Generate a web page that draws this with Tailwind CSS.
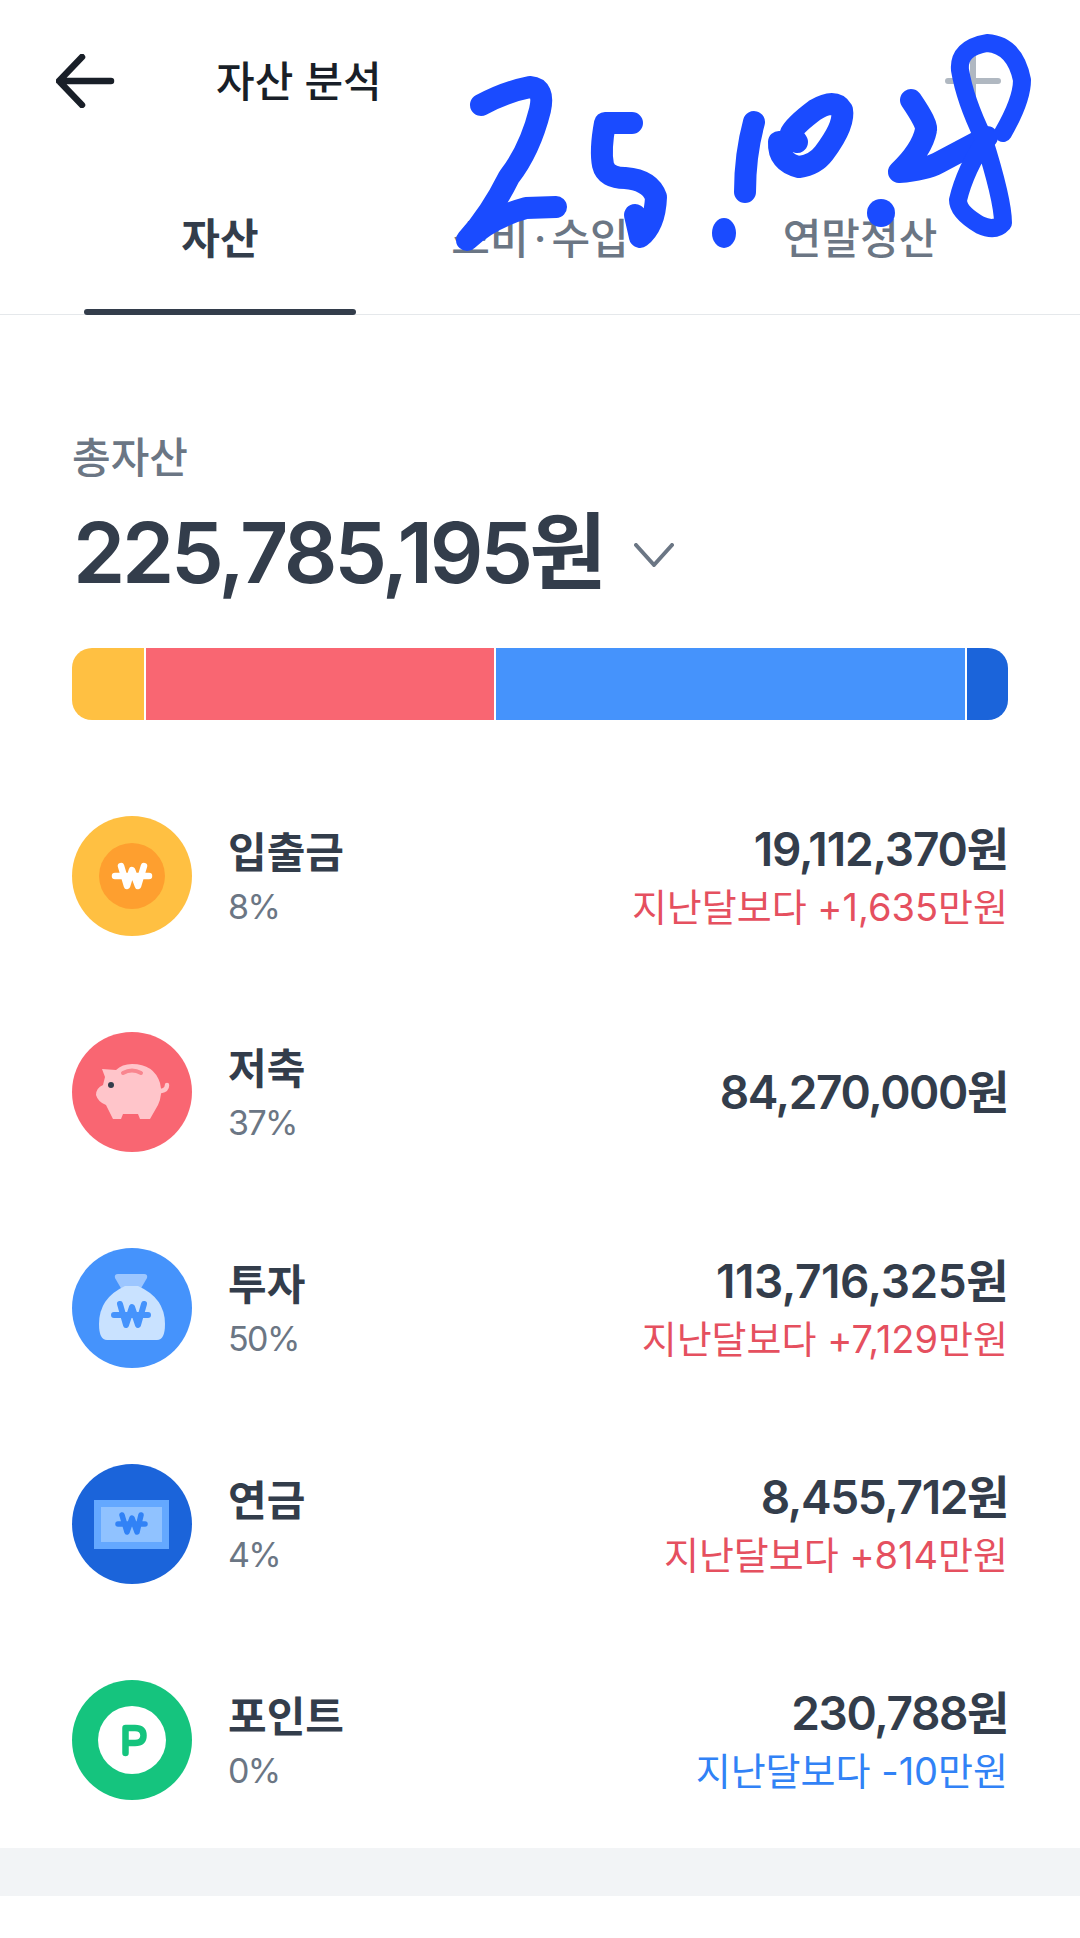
<!DOCTYPE html>
<html lang="ko">
<head>
<meta charset="utf-8">
<title>자산 분석</title>
<script src="https://cdn.jsdelivr.net/npm/@tailwindcss/browser@4"></script>
</head>
<body class="bg-white">
<div class="relative w-[1080px] h-[1938px] overflow-hidden bg-white font-['Inter','Noto_Sans_CJK_KR',sans-serif] text-[#333d4b]">

  <!-- header -->
  <header class="h-[162px] flex items-center pl-[56px] pr-[79px]">
    <svg width="60" height="54" viewBox="0 0 60 54" fill="none" stroke="#191f28" stroke-width="6.5" stroke-linecap="round" stroke-linejoin="round"><path d="M26 3 L3 27 L26 51 M3 27 H55"/></svg>
    <h1 class="ml-[100px] mt-[2px] text-[42px] font-medium text-[#191f28] leading-none">자산 분석</h1>
    <svg class="ml-auto" width="56" height="56" viewBox="0 0 56 56" fill="none" stroke="#b0b8c1" stroke-width="6" stroke-linecap="round"><path d="M3 28 H53 M28 3 V53"/></svg>
  </header>

  <!-- tabs -->
  <nav class="h-[153px] border-b border-[#e5e8eb] px-[60px] flex">
    <div class="flex-1 px-6 relative flex items-center justify-center text-[42px] font-bold text-[#333d4b]">자산<span class="absolute left-6 right-6 bottom-[-1px] h-[6px] rounded-full bg-[#333d4b]"></span></div>
    <div class="flex-1 px-6 flex items-center justify-center text-[42px] font-medium text-[#6b7684]">소비<span class="mx-[5px]">·</span>수입</div>
    <div class="flex-1 px-6 flex items-center justify-center text-[42px] font-medium text-[#6b7684]">연말정산</div>
  </nav>

  <main class="px-[72px]">
    <p class="mt-[118px] text-[42px] leading-[50px] font-medium text-[#6b7684]">총자산</p>
    <div class="mt-[28px] flex items-center h-[84px]">
      <span class="text-[84px] leading-none font-semibold tracking-[-0.04em] ml-[1px]">225,785,195원</span>
      <svg class="ml-[30px] mt-[4px]" width="40" height="24" viewBox="0 0 40 24" fill="none" stroke="#6b7684" stroke-width="4" stroke-linecap="round" stroke-linejoin="round"><path d="M2 2 L20 22 L38 2"/></svg>
    </div>

    <div class="mt-[53px] flex gap-[2px] h-[72px] rounded-[20px] overflow-hidden">
      <div class="w-[72px] bg-[#ffc042]"></div>
      <div class="w-[348px] bg-[#f96672]"></div>
      <div class="w-[469px] bg-[#4593fc]"></div>
      <div class="flex-1 bg-[#1b64da]"></div>
    </div>

    <ul class="mt-[96px] flex flex-col gap-[96px]">
      <li class="flex items-center h-[120px]">
        <div class="w-[120px] h-[120px] rounded-full bg-[#ffc042] flex items-center justify-center shrink-0">
          <svg width="66" height="66" viewBox="0 0 66 66"><circle cx="33" cy="33" r="33" fill="#fe9f2f"/><path d="M16 33 H50 M22 23 L28 43 L33 27 L39 43 L45 23" fill="none" stroke="#fff" stroke-width="6.5" stroke-linecap="round" stroke-linejoin="round"/></svg>
        </div>
        <div class="ml-[36px] mt-[3px]">
          <div class="text-[42px] leading-[50px] font-semibold">입출금</div>
          <div class="mt-[9px] text-[34px] leading-[40px] tracking-[-1.6px] text-[#6b7684]">8%</div>
        </div>
        <div class="ml-auto mt-[4px] text-right">
          <div class="text-[46px] leading-[58px] font-semibold tracking-[-0.025em]">19,112,370원</div>
          <div class="text-[38px] leading-[58px] text-[#e5505f]">지난달보다 +1,635만원</div>
        </div>
      </li>

      <li class="flex items-center h-[120px]">
        <div class="w-[120px] h-[120px] rounded-full bg-[#f96672] flex items-center justify-center shrink-0">
          <svg width="120" height="120" viewBox="0 0 120 120"><path fill="#ffc5ca" d="M30 37 L44 38 Q50 32 60 32 Q82 32 88 51 Q91 62 86 73 L78 87 H68 L66 82 H51 L49 87 H41 L34 73 Q26 70 24 63 Q24 56 31 53 L33 45 Z"/><path d="M89 59 Q95 58 95 53" fill="none" stroke="#ffc5ca" stroke-width="4.5" stroke-linecap="round"/><circle cx="39" cy="53" r="3" fill="#333d4b"/><path d="M51 41 Q60 36 69 41" fill="none" stroke="#f9868f" stroke-width="4" stroke-linecap="round"/></svg>
        </div>
        <div class="ml-[36px] mt-[3px]">
          <div class="text-[42px] leading-[50px] font-semibold">저축</div>
          <div class="mt-[9px] text-[34px] leading-[40px] tracking-[-1.6px] text-[#6b7684]">37%</div>
        </div>
        <div class="ml-auto text-right">
          <div class="text-[46px] leading-[58px] font-semibold tracking-[-0.03em]">84,270,000원</div>
        </div>
      </li>

      <li class="flex items-center h-[120px]">
        <div class="w-[120px] h-[120px] rounded-full bg-[#4593fc] flex items-center justify-center shrink-0">
          <svg width="120" height="120" viewBox="0 0 120 120"><path fill="#9cc6ff" d="M46 26 H72 Q76 26 75 30 L68 42 H50 L43 30 Q42 26 46 26 Z"/><path fill="#c9e2ff" d="M53 38 H66 Q93 50 93 76 Q93 92 85 92 H35 Q27 92 27 76 Q27 50 53 38 Z"/><path d="M42 67 H76 M48 56 L54 77 L60 59 L66 77 L72 56" fill="none" stroke="#4593fc" stroke-width="6" stroke-linecap="round" stroke-linejoin="round"/></svg>
        </div>
        <div class="ml-[36px] mt-[3px]">
          <div class="text-[42px] leading-[50px] font-semibold">투자</div>
          <div class="mt-[9px] text-[34px] leading-[40px] tracking-[-1.6px] text-[#6b7684]">50%</div>
        </div>
        <div class="ml-auto mt-[4px] text-right">
          <div class="text-[46px] leading-[58px] font-semibold tracking-[-0.01em]">113,716,325원</div>
          <div class="text-[38px] leading-[58px] text-[#e5505f]">지난달보다 +7,129만원</div>
        </div>
      </li>

      <li class="flex items-center h-[120px]">
        <div class="w-[120px] h-[120px] rounded-full bg-[#1b64da] flex items-center justify-center shrink-0">
          <svg width="120" height="120" viewBox="0 0 120 120"><rect x="22" y="36" width="75" height="49" fill="#64a8ff"/><rect x="29" y="43" width="61" height="35" fill="#90c2ff"/><path d="M46 60 H73 M50 51 L55 68 L60 54 L65 68 L69 51" fill="none" stroke="#3182f6" stroke-width="5.5" stroke-linecap="round" stroke-linejoin="round"/></svg>
        </div>
        <div class="ml-[36px] mt-[3px]">
          <div class="text-[42px] leading-[50px] font-semibold">연금</div>
          <div class="mt-[9px] text-[34px] leading-[40px] tracking-[-1.6px] text-[#6b7684]">4%</div>
        </div>
        <div class="ml-auto mt-[4px] text-right">
          <div class="text-[46px] leading-[58px] font-semibold tracking-[-0.03em]">8,455,712원</div>
          <div class="text-[38px] leading-[58px] text-[#e5505f]">지난달보다 +814만원</div>
        </div>
      </li>

      <li class="flex items-center h-[120px]">
        <div class="w-[120px] h-[120px] rounded-full bg-[#15c47e] flex items-center justify-center shrink-0">
          <svg width="68" height="68" viewBox="0 0 68 68"><circle cx="34" cy="34" r="34" fill="#fff"/><path d="M27.5 47 V22 H37 Q45.5 22 45.5 29.5 Q45.5 37 37 37 H27.5" fill="none" stroke="#15c47e" stroke-width="6.5" stroke-linecap="round" stroke-linejoin="round"/></svg>
        </div>
        <div class="ml-[36px] mt-[3px]">
          <div class="text-[42px] leading-[50px] font-semibold">포인트</div>
          <div class="mt-[9px] text-[34px] leading-[40px] tracking-[-1.6px] text-[#6b7684]">0%</div>
        </div>
        <div class="ml-auto mt-[4px] text-right">
          <div class="text-[46px] leading-[58px] font-semibold tracking-[-0.03em]">230,788원</div>
          <div class="text-[38px] leading-[58px] text-[#3182f6]">지난달보다 -10만원</div>
        </div>
      </li>
    </ul>
  </main>

  <div class="mt-[48px] h-[48px] bg-[#f2f4f6]"></div>

  <!-- handwritten date drawn over the screenshot -->
  <svg class="absolute left-0 top-0 pointer-events-none" width="1080" height="260" viewBox="0 0 1080 260" fill="none" stroke="#1a4bff" stroke-linecap="round" stroke-linejoin="round">
    <g stroke-width="22">
      <path d="M481 105 Q505 92 530 87 Q545 88 540 110 Q530 150 509 177 Q490 215 467 240 Q490 218 526 208 L556 207"/>
      <path d="M632 123 H605 Q600 150 603 165 Q606 178 625 178 Q650 180 656 197 Q655 225 640 237 L635 215"/>
      <path d="M754 122 Q745 155 745 192"/>
      <path d="M779 142 Q778 162 799 167 Q815 165 824 153 Q845 125 842 110 Q835 98 815 110 Q795 125 791 133 L797 142"/>
      <path d="M911 100 Q928 125 926 130 Q922 150 899 172 Q925 170 938 163 L987 137"/>
    </g>
    <path stroke-width="18" d="M1003 133 Q1022 100 1022 80 Q1015 45 987 43 Q958 48 960 70 Q965 100 983 137 Q1003 200 1003 223 Q995 232 980 225 Q958 212 958 200 Q965 170 987 137"/>
    <ellipse cx="724" cy="233" rx="12" ry="15" fill="#1a4bff" stroke="none"/>
    <ellipse cx="881" cy="213" rx="14" ry="14" fill="#1a4bff" stroke="none"/>
  </svg>
</div>
</body>
</html>
